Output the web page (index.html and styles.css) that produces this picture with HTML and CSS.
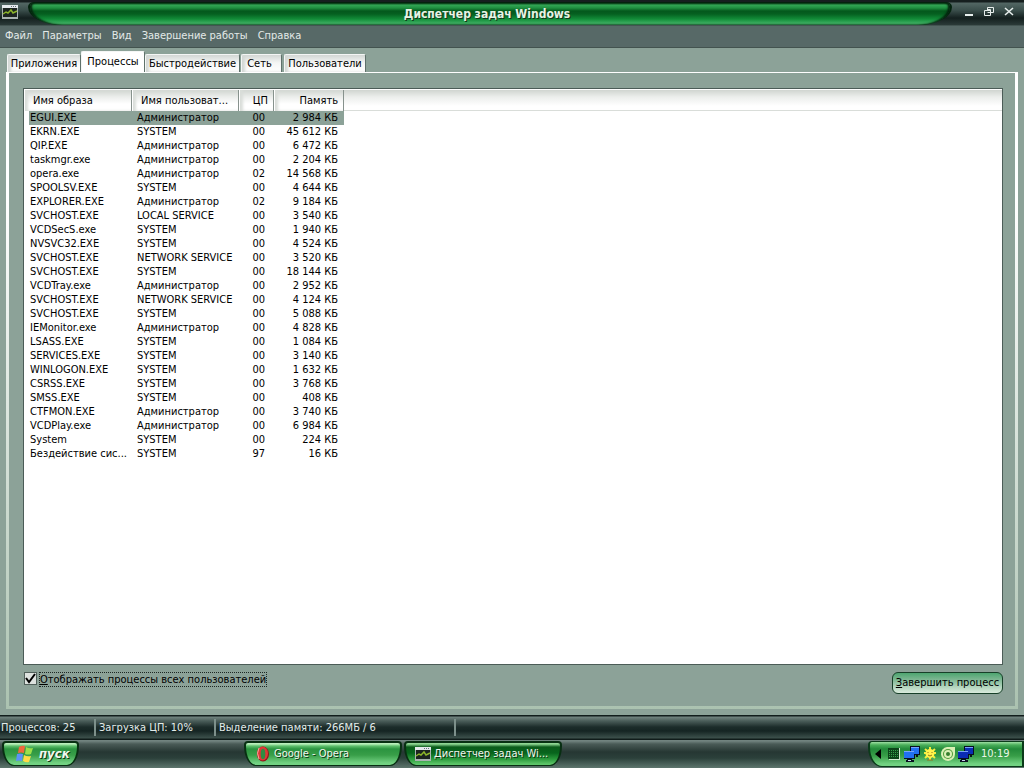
FILE: index.html
```html
<!DOCTYPE html>
<html lang="ru">
<head>
<meta charset="utf-8">
<title>Диспетчер задач Windows</title>
<link rel="stylesheet" href="styles.css">
</head>
<body>
<svg class="defs" aria-hidden="true">
  <symbol id="taskmgr" viewBox="0 0 16 14">
    <path fill="#a9b3b1" d="M0 0h16v14H0z"/><path fill="#e4e9ec" d="M0 0h16v3H0z"/>
    <path fill="#66707a" d="M9 1h1v1H9zM11 1h1v1h-1zM13 1h1v1h-1z"/>
    <path fill="#1c2420" d="M1 3h14v9H1z"/>
    <path fill="none" stroke="#8cb52a" stroke-width="1.500" d="M1 9l3-2 2 1 3-3 2 3 4-2"/>
  </symbol>
  <symbol id="screens" viewBox="0 0 16 16">
    <path fill="#081020" d="M6 0h10v9H6zM0 5h11v8H0zM3 13h5v1H3zM2 14h8v2H2zM12 9h2v2h-2z"/>
    <path fill="currentColor" d="M7 1h8v7H7zM0 5h10v7H0z"/><path fill="#c6d4ee" d="M4 14h3v1H4z"/><path stroke="#79a4f6" d="M7 1.500h8M0 5.500h10"/>
  </symbol>
</svg>
<main class="window">
  <header class="titlebar">
    <svg class="app-icon"><use href="#taskmgr"/></svg>
    <h1 class="title">Диспетчер задач Windows</h1>
    <div class="controls">
      <button aria-label="Свернуть"><svg viewBox="0 0 12 12"><path fill="#e8efed" d="M2 8h8v2H2z"/></svg></button>
      <button aria-label="Восстановить"><svg viewBox="0 0 12 12"><path fill="none" stroke="#e8efed" d="M4.500 4V1.500h6v5H8M1.500 4.500h6v5h-6zM4.500 3.500h3v3h-3"/></svg></button>
      <button aria-label="Закрыть"><svg viewBox="0 0 12 12"><path fill="none" stroke="#e8efed" stroke-width="1.600" d="M2 2l8 7M10 2l-8 7"/></svg></button>
    </div>
  </header>
  <nav class="menu">
    <button>Файл</button><button>Параметры</button><button>Вид</button><button>Завершение работы</button><button>Справка</button>
  </nav>
  <section class="content">
    <div class="tabs" role="tablist">
      <button class="tab tab-apps" role="tab">Приложения</button>
      <button class="tab tab-processes active" role="tab" aria-selected="true">Процессы</button>
      <button class="tab tab-speed" role="tab">Быстродействие</button>
      <button class="tab tab-net" role="tab">Сеть</button>
      <button class="tab tab-users" role="tab">Пользователи</button>
    </div>
    <div class="page">
      <div class="list">
        <table>
          <colgroup><col class="c-image"><col class="c-user"><col class="c-cpu"><col class="c-mem"><col></colgroup>
          <thead><tr><th>Имя образа</th><th>Имя пользоват...</th><th>ЦП</th><th>Память</th><th class="rest"></th></tr></thead>
          <tbody>
            <tr class="selected"><td>EGUI.EXE</td><td>Администратор</td><td>00</td><td>2 984 КБ</td></tr>
            <tr><td>EKRN.EXE</td><td>SYSTEM</td><td>00</td><td>45 612 КБ</td></tr>
            <tr><td>QIP.EXE</td><td>Администратор</td><td>00</td><td>6 472 КБ</td></tr>
            <tr><td>taskmgr.exe</td><td>Администратор</td><td>00</td><td>2 204 КБ</td></tr>
            <tr><td>opera.exe</td><td>Администратор</td><td>02</td><td>14 568 КБ</td></tr>
            <tr><td>SPOOLSV.EXE</td><td>SYSTEM</td><td>00</td><td>4 644 КБ</td></tr>
            <tr><td>EXPLORER.EXE</td><td>Администратор</td><td>02</td><td>9 184 КБ</td></tr>
            <tr><td>SVCHOST.EXE</td><td>LOCAL SERVICE</td><td>00</td><td>3 540 КБ</td></tr>
            <tr><td>VCDSecS.exe</td><td>SYSTEM</td><td>00</td><td>1 940 КБ</td></tr>
            <tr><td>NVSVC32.EXE</td><td>SYSTEM</td><td>00</td><td>4 524 КБ</td></tr>
            <tr><td>SVCHOST.EXE</td><td>NETWORK SERVICE</td><td>00</td><td>3 520 КБ</td></tr>
            <tr><td>SVCHOST.EXE</td><td>SYSTEM</td><td>00</td><td>18 144 КБ</td></tr>
            <tr><td>VCDTray.exe</td><td>Администратор</td><td>00</td><td>2 952 КБ</td></tr>
            <tr><td>SVCHOST.EXE</td><td>NETWORK SERVICE</td><td>00</td><td>4 124 КБ</td></tr>
            <tr><td>SVCHOST.EXE</td><td>SYSTEM</td><td>00</td><td>5 088 КБ</td></tr>
            <tr><td>IEMonitor.exe</td><td>Администратор</td><td>00</td><td>4 828 КБ</td></tr>
            <tr><td>LSASS.EXE</td><td>SYSTEM</td><td>00</td><td>1 084 КБ</td></tr>
            <tr><td>SERVICES.EXE</td><td>SYSTEM</td><td>00</td><td>3 140 КБ</td></tr>
            <tr><td>WINLOGON.EXE</td><td>SYSTEM</td><td>00</td><td>1 632 КБ</td></tr>
            <tr><td>CSRSS.EXE</td><td>SYSTEM</td><td>00</td><td>3 768 КБ</td></tr>
            <tr><td>SMSS.EXE</td><td>SYSTEM</td><td>00</td><td>408 КБ</td></tr>
            <tr><td>CTFMON.EXE</td><td>Администратор</td><td>00</td><td>3 740 КБ</td></tr>
            <tr><td>VCDPlay.exe</td><td>Администратор</td><td>00</td><td>6 984 КБ</td></tr>
            <tr><td>System</td><td>SYSTEM</td><td>00</td><td>224 КБ</td></tr>
            <tr><td>Бездействие сис...</td><td>SYSTEM</td><td>97</td><td>16 КБ</td></tr>
          </tbody>
        </table>
      </div>
      <div class="actions">
        <div class="check"><input type="checkbox" id="all" checked><label for="all"><u>О</u>тображать процессы всех пользователей</label></div>
        <button class="end"><u>З</u>авершить процесс</button>
      </div>
    </div>
  </section>
  <footer class="status"><span class="s-count">Процессов: 25</span><span class="s-cpu">Загрузка ЦП: 10%</span><span class="s-mem">Выделение памяти: 266МБ / 6</span><span class="s-rest"></span></footer>
</main>
<div class="taskbar">
  <button class="bar-button start">
    <svg viewBox="0 0 18 18"><path fill="#f0693c" d="M3 2q3-2 6-1L8 8Q5 7 2 8z"/><path fill="#9be04a" d="M10 2q3 2 7 1l-2 6q-3 1-6 0z"/><path fill="#5b93f8" d="M1 9q3-1 6 0l-1 7q-3-1-6 0z"/><path fill="#ffdc45" d="M8 10q3 2 7 1l-2 6q-3 1-6-1z"/></svg>
    <span>пуск</span>
  </button>
  <div class="tasks">
    <button class="bar-button task">
      <svg viewBox="0 0 16 16"><ellipse cx="8" cy="8" rx="6" ry="7.500" fill="#8e1519"/><ellipse cx="7.500" cy="7.500" rx="5.500" ry="7" fill="#dd3835"/><path d="M4 2Q1 7 4 13" fill="none" stroke="#f6aaa0"/><ellipse cx="8" cy="8" rx="2.300" ry="5.300" fill="#2f8c42"/></svg>
      <span>Google - Opera</span>
    </button>
    <button class="bar-button task pressed"><svg viewBox="0 0 16 14"><use href="#taskmgr"/></svg><span>Диспетчер задач Wi...</span></button>
  </div>
  <div class="tray">
    <svg class="arrow" viewBox="0 0 6 10"><path d="M6 0v10L0 5z"/></svg>
    <svg viewBox="0 0 16 16"><path fill="#d5ecd4" d="M3 2h11v12H3z"/><path fill="#0c4419" d="M2 2h11v11H2z"/><path stroke="#36a04b" stroke-dasharray="1 1" d="M3 4.500h9M3 6.500h9M3 8.500h9M3 10.500h9"/></svg>
    <svg class="net-light"><use href="#screens"/></svg>
    <svg viewBox="0 0 16 16"><path stroke="#f4ec3c" stroke-width="2" d="M8 1v13M2 7h12M3 3l10 9M13 3L3 12"/><circle cx="8" cy="7.500" r="4.500" fill="#fff34b"/><path fill="none" stroke="#93721c" d="M6 6v1M10 6v1M6 9q2 2 4 0M5 14h6"/></svg>
    <svg viewBox="0 0 16 16"><path fill="#d9efb4" d="M7 1h8v7a7 7 0 1 1-8-7z"/><circle cx="8" cy="8" r="5" fill="#4c9a38"/><circle cx="8" cy="8" r="4" fill="#d9efb4"/><circle cx="8" cy="8" r="2" fill="#347e2d"/></svg>
    <svg class="net-dark"><use href="#screens"/></svg>
    <time>10:19</time>
  </div>
</div>
</body>
</html>
```
FILE: styles.css
```css
* { box-sizing: border-box; }
body {
  margin: 0;
  min-height: 100vh;
  display: flex;
  flex-direction: column;
  background: #8ca298;
  color: #000;
  font: 11px/14px Tahoma, "DejaVu Sans Condensed", "DejaVu Sans", sans-serif;
  white-space: nowrap;
}
button { font: inherit; color: inherit; background: none; border: 0; padding: 0; margin: 0; white-space: nowrap; }
.defs { position: absolute; width: 0; height: 0; }
.window { flex: 1; display: flex; flex-direction: column; }

.titlebar {
  display: flex;
  height: 26px;
  padding: 2px 0 1px;
  background: linear-gradient(#161f1f 0 2px, #536764 3px, #3c504d 10px, #14201f 18px, #2b3a38 25px, #5c6f6c);
}
.app-icon { width: 16px; height: 14px; margin: 3px 10px 0 2px; }
.title {
  flex: 1;
  margin: 0;
  padding-right: 6px;
  text-align: center;
  font-size: 12px;
  line-height: 22px;
  color: #e6f3e4;
  text-shadow: 1px 1px #10351a;
  border: 0 solid #04230e;
  border-width: 1px 2px 0;
  border-radius: 6px 6px 34px 34px / 5px 5px 18px 18px;
  background: linear-gradient(#0a4a1c, #33a655 2px, #1f8f40 5px, #04581c 8px, #056020 11px, #128c38 16px, #43b267 21px);
  box-shadow: inset 2px 0 2px #04230e, inset -2px 0 2px #04230e;
}
.controls { display: flex; gap: 8px; width: 72px; padding: 4px 9px 0 0; justify-content: flex-end; }
.controls button { width: 12px; height: 12px; }
.controls svg { display: block; width: 12px; height: 12px; }

.menu {
  display: flex;
  gap: 10px;
  height: 22px;
  padding: 0 0 2px 5px;
  color: #e3e9e7;
  background: #576967;
  border-bottom: 1px solid #43534f;
}

.content { flex: 1; display: flex; flex-direction: column; padding: 3px 6px 6px; }
.tabs { display: flex; align-items: flex-end; height: 21px; padding-left: 1px; }
.tab {
  height: 18px;
  line-height: 17px;
  border: solid #f4f6f5;
  border-width: 1px 1px 0;
  border-right-color: #5f716b;
  border-radius: 2px 2px 0 0;
  background: linear-gradient(#d3d8d5, #f5f6f5 8px, #fff);
  box-shadow: inset 3px 0 3px #d3d8d5;
}
.tab.active { height: 21px; line-height: 18px; background: #fff; box-shadow: none; }
.tab-apps { width: 74px; }
.tab-processes { width: 64px; }
.tab-speed { width: 95px; }
.tab-net { width: 41px; margin: 0 2px 0 1px; padding-right: 4px; }
.tab-users { width: 82px; }

.page {
  flex: 1;
  display: flex;
  flex-direction: column;
  padding: 15px 12px 12px 14px;
  border: solid;
  border-width: 1px 3px 3px;
  border-color: #fff #cbd8cf #abc2b0;
  border-image: linear-gradient(#fff, #fff 20%, #abc2b0) 1 3 3;
}
.list { flex: 1; border: 1px solid #4b5c57; background: #fff; padding-top: 1px; }
table { width: 100%; table-layout: fixed; border-collapse: separate; border-spacing: 0; }
.c-image { width: 108px; }
.c-user { width: 107px; }
.c-cpu { width: 35px; }
.c-mem { width: 70px; }
th {
  height: 21px;
  padding: 1px 4px 0 8px;
  text-align: left;
  font-weight: normal;
  background: linear-gradient(#d0d5d0, #eceeec 7px, #fff 14px);
  border-right: 1px solid #87928d;
  border-left: 1px solid #fff;
  box-shadow: inset 3px 0 3px #d9ddd9;
}
th:nth-child(3), th:nth-child(4) { text-align: right; padding-left: 0; padding-right: 5px; }
th.rest { border: 0; box-shadow: none; background: linear-gradient(#d0d5d0, #eceeec 7px, #fff 16px); border-bottom: 1px solid #d9ddd9; }
td { height: 14px; line-height: 14px; padding: 0 5px; background-clip: padding-box; }
td:first-child { padding-left: 1px; padding-right: 0; border-left: 5px solid transparent; }
td:nth-child(3) { text-align: right; padding: 0 9px 0 0; }
td:nth-child(4) { text-align: right; padding: 0 6px 0 0; }
.selected td { background-color: #8ca298; }

.actions { display: flex; justify-content: space-between; padding: 7px 0 0; }
.check { display: flex; align-items: flex-start; gap: 2px; }
.check input {
  appearance: none;
  width: 13px;
  height: 13px;
  margin: 0 0 0 1px;
  border: 1px solid #51605b;
  background: url("data:image/svg+xml,%3Csvg xmlns='http://www.w3.org/2000/svg' viewBox='0 0 11 11'%3E%3Cpath d='M1 5l3 4L10 1' fill='none' stroke='%23000' stroke-width='2'/%3E%3C/svg%3E") #dde2df;
}
.check label { height: 15px; line-height: 14px; border: 1px dotted #1d2723; }
.end {
  height: 22px;
  width: 111px;
  border: 1px solid #173f28;
  border-radius: 6px;
  background: linear-gradient(#4da670, #79b58f 6px, #b3d5be 14px, #d9eadc);
}

.status {
  display: flex;
  height: 25px;
  padding-top: 4px;
  color: #e3ecea;
  background: linear-gradient(#111c1b 1px, #71837f 2px, #4a5d59 6px, #1c2c2a 12px, #152523 16px, #3c504b 23px, #101c1a 24px);
}
.status span { height: 17px; line-height: 18px; border-right: 2px solid #7d908b; padding-left: 3px; }
.status .s-count { width: 96px; padding-left: 1px; }
.status .s-cpu { width: 120px; }
.status .s-mem { width: 240px; }
.status .s-rest { flex: 1; border: 0; }

.taskbar {
  display: flex;
  height: 28px;
  padding-left: 2px;
  background: linear-gradient(#71837f 1px, #4a5b57 4px, #263733 12px, #2b403a 18px, #5d756d);
}
.bar-button {
  display: flex;
  align-items: center;
  gap: 3px;
  height: 25px;
  margin-top: 1px;
  color: #eff7ed;
  text-shadow: 1px 1px #0c3815;
  border: 1px solid #082f12;
  border-width: 2px 2px 1px;
  border-radius: 4px 4px 12px 12px / 4px 4px 20px 20px;
  background: linear-gradient(#b9efbb 1px, #5fc06d 3px, #2b9440 6px, #389e48 12px, #72d282 20px);
}
.bar-button svg { width: 16px; height: 16px; flex: none; }
.start { width: 77px; padding-left: 12px; gap: 5px; font-size: 13px; font-weight: bold; font-style: italic; }
.start svg { width: 18px; height: 18px; }
.tasks { flex: 1; display: flex; gap: 2px; padding-left: 165px; }
.task { width: 158px; padding-left: 9px; }
.pressed { background: linear-gradient(#8fd693 1px, #0a5b1a 4px, #07651d 10px, #2a9a3b 16px, #5cc468 21px); }
.tray {
  display: flex;
  align-items: center;
  gap: 2px;
  width: 156px;
  height: 26px;
  padding-left: 5px;
  margin-top: 1px;
  color: #eaf7e7;
  border: 1px solid #0b3b1a;
  border-width: 1px 2px;
  border-radius: 4px 0 0 14px / 4px 0 0 20px;
  background: linear-gradient(#9fe0a4, #49ae59 3px, #238a3a 7px, #389e48 14px, #72d282 22px);
}
.tray svg { width: 16px; height: 16px; flex: none; }
.tray .arrow { width: 6px; height: 10px; margin-right: 3px; }
.net-light { color: #2170f0; }
.net-dark { color: #0a2cb4; }
.tray time { margin-left: 5px; }
```
